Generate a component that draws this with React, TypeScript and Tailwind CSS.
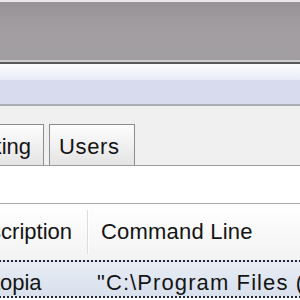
export default function App() {
  return (
    <div className="w-[300px] h-[300px] overflow-hidden flex flex-col bg-white text-[#141414] font-['Liberation_Sans',Arial,sans-serif] text-[22px]">
      {/* window title area */}
      <div className="h-[2px] bg-[#ebe7eb]" />
      <div className="h-[58px] bg-gradient-to-b from-[#979397] via-[#a29ea2] to-[#a19ea2]" />
      <div className="h-[2px] bg-[#cdcdcf]" />
      <div className="h-[2px] bg-[#575757]" />
      {/* menu bar */}
      <div className="h-[16px] bg-gradient-to-b from-[#fbfcff] to-[#e9ecf7]" />
      <div className="h-[24px] bg-[#d7dbed]" />
      <div className="h-[2px] bg-[#acaeb6]" />
      {/* tab strip */}
      <div className="h-[59px] bg-[#f0f0f0] flex items-end gap-[5px]">
        <div className="shrink-0 ml-[-90px] h-[41px] border border-b-0 border-[#8d8d8d] bg-gradient-to-b from-[#fdfdfd] to-[#e4e4e4] pl-[10px] pr-[12px] pt-[9px] leading-[25px] whitespace-nowrap">
          Networking
        </div>
        <div className="shrink-0 h-[41px] w-[86px] border border-b-0 border-[#8d8d8d] bg-gradient-to-b from-[#fdfdfd] to-[#e4e4e4] pl-[9px] pt-[9px] leading-[25px] tracking-[0.6px] whitespace-nowrap">
          Users
        </div>
      </div>
      <div className="h-[1px] bg-[#9c9c9c]" />
      <div className="h-[37px] bg-white" />
      {/* process list */}
      <div className="h-[1px] bg-[#a9a9a9]" />
      <div className="h-[56px] flex bg-gradient-to-b from-white to-[#f3f3f3] whitespace-nowrap">
        <div className="shrink-0 w-[87px] overflow-hidden pt-[15px] leading-[25px]">
          <span className="block ml-[-38px]">Description</span>
        </div>
        <div className="shrink-0 w-[1px] bg-[#dcdcdc] my-[6px]" />
        <div className="shrink-0 w-[1px] bg-white my-[6px]" />
        <div className="flex-1 min-w-0 overflow-hidden pl-[12px] pt-[15px] leading-[25px] tracking-[0.2px]">Command Line</div>
      </div>
      <div className="h-[38px] -mx-[4px] flex border-2 border-dotted border-[#262638] bg-gradient-to-b from-[#e8edf5] to-[#d8e0ec] whitespace-nowrap">
        <div className="shrink-0 w-[87px] overflow-hidden pt-[8px] leading-[25px]">
          <span className="block ml-[-20px]">Utopia</span>
        </div>
        <div className="flex-1 min-w-0 overflow-hidden pl-[12px] pt-[8px] leading-[25px] tracking-[1.1px]">"C:\Program Files (x86)\Utopia\utopia.exe"</div>
      </div>
    </div>
  )
}
